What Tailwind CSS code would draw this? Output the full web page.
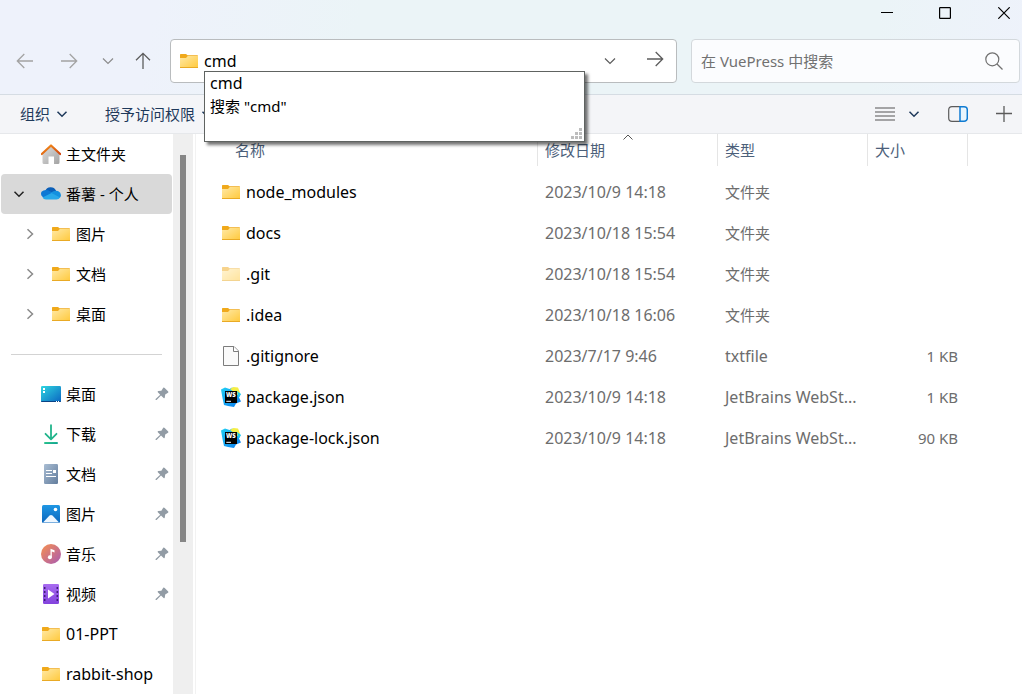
<!DOCTYPE html>
<html lang="zh-CN">
<head>
<meta charset="utf-8">
<meta name="viewport" content="width=device-width, initial-scale=1">
<title>VuePress</title>
<script src="https://cdn.jsdelivr.net/npm/@tailwindcss/browser@4"></script>
</head>
<body class="flex min-h-screen flex-col bg-white font-['Noto_Sans','Noto_Sans_CJK_SC',sans-serif] text-[15px] leading-5 text-black">
<svg class="absolute size-0" aria-hidden="true">
  <defs>
    <linearGradient id="gFolder" x1="0" y1="0" x2="1" y2="1"><stop offset="0" stop-color="#ffe9a6"/><stop offset="1" stop-color="#ffc93c"/></linearGradient>
    <linearGradient id="gWall" x1="0" y1="0" x2="1" y2="1"><stop offset="0" stop-color="#dedede"/><stop offset="1" stop-color="#a3a3a3"/></linearGradient>
    <linearGradient id="gRoof" x1="0" y1="0" x2="1" y2="1"><stop offset="0" stop-color="#f7931a"/><stop offset="1" stop-color="#cf4510"/></linearGradient>
    <linearGradient id="gDesk" x1="0" y1="0" x2="1" y2="1"><stop offset="0" stop-color="#2fd6e0"/><stop offset="1" stop-color="#0b66c2"/></linearGradient>
    <linearGradient id="gDown" x1="0" y1="0" x2="1" y2="1"><stop offset="0" stop-color="#35cf8c"/><stop offset="1" stop-color="#0c9a94"/></linearGradient>
    <linearGradient id="gDoc" x1="0" y1="0" x2="1" y2="1"><stop offset="0" stop-color="#a9bdd3"/><stop offset="1" stop-color="#637d9d"/></linearGradient>
    <linearGradient id="gPic" x1="0" y1="0" x2="0" y2="1"><stop offset="0" stop-color="#1f97e4"/><stop offset="1" stop-color="#0b66bd"/></linearGradient>
    <linearGradient id="gMusic" x1="0" y1="0" x2="1" y2="1"><stop offset="0.1" stop-color="#f08b58"/><stop offset="1" stop-color="#a85ab4"/></linearGradient>
    <linearGradient id="gVideo" x1="0" y1="0" x2="0" y2="1"><stop offset="0" stop-color="#a86cf0"/><stop offset="1" stop-color="#8343dd"/></linearGradient>
    <linearGradient id="gWs" x1="0" y1="0" x2="1" y2="1"><stop offset="0" stop-color="#20d0f5"/><stop offset="1" stop-color="#0878ef"/></linearGradient>
    <symbol id="folder" viewBox="0 0 20 20"><path d="M1 3.700Q1 3 1.700 3H7l1.600 1.200H18.300Q19 4.200 19 5V9H1Z" fill="#f0a91b"/><path d="M1 7H7L8.800 5H19V16.200Q19 17 18.200 17H1.800Q1 17 1 16.200Z" fill="url(#gFolder)"/><path d="M1 16.500H19" stroke="#e9aa25"/></symbol>
    <symbol id="home" viewBox="0 0 20 20"><path d="M1.500 9 10 1.800 18.500 9V18.500Q18.500 20 17 20H13V12.500H7.500V20H3Q1.500 20 1.500 18.500Z" fill="url(#gWall)"/><path d="M.8 10 10 1.500 19.200 10" fill="none" stroke="url(#gRoof)" stroke-width="2.200" stroke-linejoin="round" stroke-linecap="round"/></symbol>
    <symbol id="cloud" viewBox="0 0 20 20"><path d="M4.200 7.200A5.800 5.800 0 0 1 15 6.600Q15.400 8 14.500 10H6Z" fill="#0b5fb8"/><path d="M3 13.500A4 4 0 0 1 .5 7.800Q3 5.200 7 6.200L14 10 7 14Z" fill="#0f78d4"/><path d="M10 8.500Q13.500 5.800 17 7Q20 8.500 20 11.200Q19.800 13.500 18.500 14L13 12Z" fill="#1490df"/><path d="M1.500 13.500 10.500 9 19 13.400Q18 15.500 15.500 15.500H5Q2.500 15.500 1.500 13.500Z" fill="#28a8ea"/></symbol>
    <symbol id="desktop" viewBox="0 0 20 20"><rect y="2" width="20" height="16" rx="1.200" fill="url(#gDesk)"/><path d="M0 17H20Q20 18 19 18H1Q0 18 0 17Z" fill="#0a4385"/><path d="M2 4h2v2H2zM2 7h2v2H2zM15 17h1v1h-1zM17 17h1v1h-1z" fill="#fff"/></symbol>
    <symbol id="download" viewBox="0 0 20 20"><path d="M10 1.200V15M4.500 9.800 10 15.300 15.500 9.800" fill="none" stroke="#21b48b" stroke-width="1.800" stroke-linejoin="round" stroke-linecap="round"/><rect x="3" y="18" width="14" height="2" rx="1" fill="url(#gDown)"/></symbol>
    <symbol id="document" viewBox="0 0 20 20"><rect x="3" width="14" height="20" rx="1.200" fill="url(#gDoc)"/><path d="M5 6.500h6M5 9.500h6M5 12.500h10" stroke="#fff" stroke-width="1.200"/><rect x="12" y="6" width="3" height="3" fill="#fff"/></symbol>
    <symbol id="picture" viewBox="0 0 20 20"><rect x="1" y="1" width="18" height="18" rx="1.500" fill="url(#gPic)"/><path d="M2 18.500 8.500 11.500Q10 10.300 11.500 11.500L18 18.500Z" fill="#eef7ff"/><circle cx="14.500" cy="5.500" r="1.800" fill="#fff"/></symbol>
    <symbol id="music" viewBox="0 0 20 20"><circle cx="10" cy="10" r="10" fill="url(#gMusic)"/><path d="M9.500 13V4.800L13.500 6.300V8.500L10.800 7.500V13Z" fill="#fff"/><circle cx="8.900" cy="13.200" r="2" fill="#fff"/></symbol>
    <symbol id="video" viewBox="0 0 20 20"><rect x="2" width="16" height="20" rx="1.200" fill="url(#gVideo)"/><path d="M3.700 3v15M16.300 3v15" stroke="#3f1d78" stroke-width="1.500" stroke-dasharray="2 2"/><path d="M7 5.500 13.500 10 7 14.500Z" fill="#fff"/></symbol>
    <symbol id="file" viewBox="0 0 20 20"><path d="M2.500.5H13L17.500 5V19.500H2.500Z" fill="#fafafa" stroke="#7c7c7c"/><path d="M12.500.5V5.500H17.500" fill="#fff" stroke="#7c7c7c"/></symbol>
    <symbol id="webstorm" viewBox="0 0 20 20"><path d="M0 2.500 4 .5 8.500 2 11 .5 16 3 19.500 7.500 18 10.500 20 14.500 15 16.500 13 20 7 19 3 18 1.500 11Z" fill="url(#gWs)"/><path d="M9 2 12.500 0 17 .5 19 5.500 16.500 8Z" fill="#f5ee45"/><path d="M16 4 20 7 17.500 11Z" fill="#19cdf0"/><rect x="4" y="4" width="12" height="12" fill="#000"/><text x="5" y="9.800" font-family="Open Sans, sans-serif" font-size="6" font-weight="800" fill="#fff">WS</text><path d="M5.300 14.300H10" stroke="#fff"/></symbol>
    <symbol id="pin" viewBox="0 0 14 14"><path d="M8.200.7Q9 .2 9.700.9L13.200 4.400Q13.800 5.100 13 5.700L10.200 7.400 9.800 10.600Q9.500 11.700 8.600 10.900L6 8.500 1.600 13H.6V12L5.200 7.700 2.800 5.200Q2.200 4.300 3.300 4.100L6.400 3.700Z" fill="#929ca5"/></symbol>
    <symbol id="down" viewBox="0 0 12 12"><path d="M1.500 3.800 6 8.300 10.500 3.800" fill="none" stroke="currentColor" stroke-width="1.500"/></symbol>
    <symbol id="downThin" viewBox="0 0 12 12"><path d="M1 3.500 6 8.500 11 3.500" fill="none" stroke="currentColor" stroke-width="1.200"/></symbol>
    <symbol id="right" viewBox="0 0 12 12"><path d="M3.500 1.300 8.500 6 3.500 10.700" fill="none" stroke="currentColor" stroke-width="1.500"/></symbol>
    <symbol id="arrow" viewBox="0 0 18 18"><path d="M1 9H16.500M9.700 2 16.700 9 9.700 16" fill="none" stroke="currentColor" stroke-width="1.300"/></symbol>
  </defs>
</svg>

<header class="bg-[linear-gradient(100deg,#eef2fb_15%,#ebf4f7_35%,#ebf4f7_85%,#eef2fb)]">
  <div class="flex h-[39px] items-start justify-end">
    <button class="flex h-[26px] w-[58px] items-center justify-center" aria-label="最小化"><svg class="size-3" viewBox="0 0 12 12"><path d="M0 5.500H12" stroke="#000"/></svg></button>
    <button class="flex h-[26px] w-[58px] items-center justify-center" aria-label="最大化"><svg class="size-3" viewBox="0 0 12 12"><rect x=".6" y=".6" width="10.800" height="10.800" rx=".6" fill="none" stroke="#000" stroke-width="1.200"/></svg></button>
    <button class="flex h-[26px] w-12 items-center justify-center pr-3 pl-6" aria-label="关闭"><svg class="size-3 shrink-0" viewBox="0 0 12 12"><path d="M.3.3 11.700 11.700M11.700.3.3 11.700" stroke="#000" stroke-width="1.200"/></svg></button>
  </div>
  <div class="flex h-[55px] items-start pr-0.5">
    <nav class="flex h-11 w-[170px] shrink-0 items-center gap-[26px] pl-4 text-[#a3a3a3]">
      <button aria-label="后退"><svg class="size-[18px] rotate-180"><use href="#arrow"/></svg></button>
      <button aria-label="前进"><svg class="size-[18px]"><use href="#arrow"/></svg></button>
      <button class="-mx-0.5 text-[#8c8c8c]" aria-label="最近浏览的位置"><svg class="size-3"><use href="#downThin"/></svg></button>
      <button class="-ml-1 text-[#5c5c5c]" aria-label="向上"><svg class="size-[18px] -rotate-90"><use href="#arrow"/></svg></button>
    </nav>
    <div class="relative mr-3.5 flex h-11 flex-1 items-center rounded border border-[#b9bcbe] bg-white pl-2 text-[#5c5c5c]">
      <svg class="size-5 shrink-0"><use href="#folder"/></svg>
      <input class="ml-[5px] h-5 min-w-0 flex-1 border-0 bg-transparent p-0 text-base text-black outline-none" aria-label="地址" value="cmd">
      <button class="mr-[30px]" aria-label="历史记录"><svg class="size-3"><use href="#downThin"/></svg></button>
      <button class="mr-3 mb-1" aria-label="转到"><svg class="size-[18px]"><use href="#arrow"/></svg></button>
      <ul class="absolute top-[31px] right-[91px] left-[33px] z-10 h-[71px] border border-[#5f6361] bg-white pl-[5px] leading-[23px] text-black shadow-[3px_3px_3px_rgba(0,0,0,0.55)]" role="listbox">
        <li class="text-base leading-[23px]" role="option">cmd</li>
        <li role="option">搜索 "cmd"</li>
        <svg class="absolute right-0.5 bottom-0.5 size-[11px]" viewBox="0 0 11 11"><path d="M8 0h3v3H8zM4 4h3v3H4zM8 4h3v3H8zM0 8h3v3H0zM4 8h3v3H4zM8 8h3v3H8z" fill="#bdbdbd"/></svg>
      </ul>
    </div>
    <div class="flex h-11 w-[329px] items-center rounded border border-[#d3d8dc] bg-[#fbfcfe] pr-4 pl-[9px]">
      <input class="min-w-0 flex-1 border-0 bg-transparent p-0 outline-none placeholder:text-[#717171]" type="search" aria-label="搜索" placeholder="在 VuePress 中搜索">
      <button aria-label="开始搜索"><svg class="size-[18px]" viewBox="0 0 18 18"><circle cx="7.300" cy="7.300" r="6.500" fill="none" stroke="#707070" stroke-width="1.200"/><path d="M12 12 17.500 17.500" stroke="#707070" stroke-width="1.300"/></svg></button>
    </div>
  </div>
</header>

<div class="flex h-10 items-center border-y border-t-[#d5dce3] border-b-[#e6e8eb] bg-[#f4f5f8] pr-2.5 pl-5 text-[#1e395b]" role="toolbar">
  <button class="flex items-center gap-1.5">组织<svg class="size-3"><use href="#down"/></svg></button>
  <button class="ml-[37px] flex items-center gap-1.5">授予访问权限<svg class="size-3"><use href="#down"/></svg></button>
  <button class="ml-auto text-[#555]" aria-label="视图"><svg class="h-3.5 w-5" viewBox="0 0 20 14"><path d="M0 1H20M0 5H20M0 9H20M0 13H20" stroke="currentColor" stroke-width="1.200"/></svg></button>
  <button class="ml-[13px]" aria-label="更改视图"><svg class="size-3"><use href="#down"/></svg></button>
  <button class="ml-7" aria-label="预览窗格"><svg class="h-4 w-5" viewBox="0 0 20 16"><path d="M12 .7H4Q.7.7.7 4V12Q.7 15.300 4 15.300H12" fill="none" stroke="#5b5b5b" stroke-width="1.200"/><path d="M12 .8H16Q19.300.8 19.300 4V12Q19.300 15.200 16 15.200H12Z" fill="#e9f5fd" stroke="#0f7bd2" stroke-width="1.500"/></svg></button>
  <button class="ml-7" aria-label="新建"><svg class="size-4" viewBox="0 0 16 16"><path d="M0 7.500H16M8 0V16" stroke="#5b5b5b" stroke-width="1.300"/></svg></button>
</div>

<div class="flex flex-1">
  <nav class="w-[173px] shrink-0" aria-label="导航窗格">
    <a href="#" class="flex h-10 items-center gap-[5px] pl-[41px]"><svg class="size-5"><use href="#home"/></svg>主文件夹</a>
    <a href="#" class="mr-px ml-px flex h-10 items-center gap-[5px] rounded-sm bg-[#d9d9d9] pl-3"><svg class="mr-[11px] size-3 text-[#222]"><use href="#down"/></svg><svg class="size-5"><use href="#cloud"/></svg>番薯 - 个人</a>
    <a href="#" class="flex h-10 items-center gap-[5px] pl-6"><svg class="mr-2.5 size-3 text-[#8a8a8a]"><use href="#right"/></svg><svg class="size-5"><use href="#folder"/></svg>图片</a>
    <a href="#" class="flex h-10 items-center gap-[5px] pl-6"><svg class="mr-2.5 size-3 text-[#8a8a8a]"><use href="#right"/></svg><svg class="size-5"><use href="#folder"/></svg>文档</a>
    <a href="#" class="flex h-10 items-center gap-[5px] pl-6"><svg class="mr-2.5 size-3 text-[#8a8a8a]"><use href="#right"/></svg><svg class="size-5"><use href="#folder"/></svg>桌面</a>
    <div class="flex h-10 items-center pr-[11px] pl-[11px]"><hr class="w-full border-[#d3d3d3]"></div>
    <a href="#" class="flex h-10 items-center gap-[5px] pr-1 pl-[41px]"><svg class="size-5"><use href="#desktop"/></svg>桌面<svg class="ml-auto size-3.5"><use href="#pin"/></svg></a>
    <a href="#" class="flex h-10 items-center gap-[5px] pr-1 pl-[41px]"><svg class="size-5"><use href="#download"/></svg>下载<svg class="ml-auto size-3.5"><use href="#pin"/></svg></a>
    <a href="#" class="flex h-10 items-center gap-[5px] pr-1 pl-[41px]"><svg class="size-5"><use href="#document"/></svg>文档<svg class="ml-auto size-3.5"><use href="#pin"/></svg></a>
    <a href="#" class="flex h-10 items-center gap-[5px] pr-1 pl-[41px]"><svg class="size-5"><use href="#picture"/></svg>图片<svg class="ml-auto size-3.5"><use href="#pin"/></svg></a>
    <a href="#" class="flex h-10 items-center gap-[5px] pr-1 pl-[41px]"><svg class="size-5"><use href="#music"/></svg>音乐<svg class="ml-auto size-3.5"><use href="#pin"/></svg></a>
    <a href="#" class="flex h-10 items-center gap-[5px] pr-1 pl-[41px]"><svg class="size-5"><use href="#video"/></svg>视频<svg class="ml-auto size-3.5"><use href="#pin"/></svg></a>
    <a href="#" class="flex h-10 items-center gap-[5px] pl-[41px] text-base"><svg class="size-5"><use href="#folder"/></svg>01-PPT</a>
    <a href="#" class="flex h-10 items-center gap-[5px] pl-[41px] text-base whitespace-nowrap"><svg class="size-5 shrink-0"><use href="#folder"/></svg>rabbit-shop</a>
  </nav>
  <div class="flex w-5 shrink-0 flex-col items-center bg-[#efefef]"><div class="mt-[21px] h-[387px] w-1.5 bg-[#868686]"></div></div>
  <main class="ml-0.5 min-w-0 flex-1 border-l border-[#f2f2f2]">
    <table class="w-full table-fixed border-collapse text-left text-[#6d6d6d]">
      <colgroup><col class="w-[342px]"><col class="w-[180px]"><col class="w-[150px]"><col class="w-[100px]"><col></colgroup>
      <thead class="text-[#4c607a]">
        <tr class="h-8">
          <th class="pl-[39px] font-normal shadow-[inset_-1px_0_#e5e5e5]">名称</th>
          <th class="relative pl-[7px] font-normal shadow-[inset_-1px_0_#e5e5e5]">修改日期<svg class="absolute top-0 left-[85px] h-1.5 w-2.5" viewBox="0 0 10 6"><path d="M.5 5.500 5 1 9.500 5.500" fill="none" stroke="#555"/></svg></th>
          <th class="pl-[7px] font-normal shadow-[inset_-1px_0_#e5e5e5]">类型</th>
          <th class="pl-[7px] font-normal shadow-[inset_-1px_0_#e5e5e5]">大小</th>
          <td></td>
        </tr>
      </thead>
      <tbody class="before:block before:h-[5px]">
        <tr class="h-[41px]"><td class="pl-[25px]"><div class="flex items-center gap-[5px] text-base leading-5 text-black"><svg class="size-5"><use href="#folder"/></svg>node_modules</div></td><td class="pl-[7px] text-base leading-5">2023/10/9 14:18</td><td class="pl-[7px]">文件夹</td><td></td><td></td></tr>
        <tr class="h-[41px]"><td class="pl-[25px]"><div class="flex items-center gap-[5px] text-base leading-5 text-black"><svg class="size-5"><use href="#folder"/></svg>docs</div></td><td class="pl-[7px] text-base leading-5">2023/10/18 15:54</td><td class="pl-[7px]">文件夹</td><td></td><td></td></tr>
        <tr class="h-[41px]"><td class="pl-[25px]"><div class="flex items-center gap-[5px] text-base leading-5 text-black"><svg class="size-5 opacity-50"><use href="#folder"/></svg>.git</div></td><td class="pl-[7px] text-base leading-5">2023/10/18 15:54</td><td class="pl-[7px]">文件夹</td><td></td><td></td></tr>
        <tr class="h-[41px]"><td class="pl-[25px]"><div class="flex items-center gap-[5px] text-base leading-5 text-black"><svg class="size-5"><use href="#folder"/></svg>.idea</div></td><td class="pl-[7px] text-base leading-5">2023/10/18 16:06</td><td class="pl-[7px]">文件夹</td><td></td><td></td></tr>
        <tr class="h-[41px]"><td class="pl-[25px]"><div class="flex items-center gap-[5px] text-base leading-5 text-black"><svg class="size-5"><use href="#file"/></svg>.gitignore</div></td><td class="pl-[7px] text-base leading-5">2023/7/17 9:46</td><td class="pl-[7px] text-base leading-5">txtfile</td><td class="pr-2.5 text-right">1 KB</td><td></td></tr>
        <tr class="h-[41px]"><td class="pl-[25px]"><div class="flex items-center gap-[5px] text-base leading-5 text-black"><svg class="size-5"><use href="#webstorm"/></svg>package.json</div></td><td class="pl-[7px] text-base leading-5">2023/10/9 14:18</td><td class="pl-[7px] text-base leading-5">JetBrains WebSt...</td><td class="pr-2.5 text-right">1 KB</td><td></td></tr>
        <tr class="h-[41px]"><td class="pl-[25px]"><div class="flex items-center gap-[5px] text-base leading-5 text-black"><svg class="size-5"><use href="#webstorm"/></svg>package-lock.json</div></td><td class="pl-[7px] text-base leading-5">2023/10/9 14:18</td><td class="pl-[7px] text-base leading-5">JetBrains WebSt...</td><td class="pr-2.5 text-right">90 KB</td><td></td></tr>
      </tbody>
    </table>
  </main>
</div>
</body>
</html>
